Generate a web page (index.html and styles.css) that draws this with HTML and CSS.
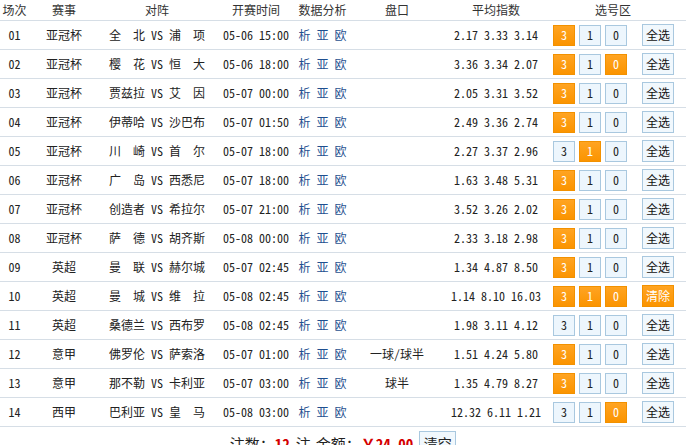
FILE: index.html
```html
<!DOCTYPE html>
<html lang="zh-CN">
<head>
<meta charset="utf-8">
<title>选号</title>
<link rel="stylesheet" href="styles.css">
</head>
<body>
<div class="table">
  <div class="row head">
    <div>场次</div><div>赛事</div><div>对阵</div><div>开赛时间</div><div>数据分析</div><div>盘口</div><div>平均指数</div><div class="sel-head">选号区</div>
  </div>
  <div class="row"><div>01</div><div>亚冠杯</div><div>全　北 VS 浦　项</div><div>05-06 15:00</div><div class="links"><a>析</a> <a>亚</a> <a>欧</a></div><div></div><div>2.17 3.33 3.14</div><div class="pick"><span class="b on">3</span><span class="b">1</span><span class="b">0</span><span class="all">全选</span></div></div>
  <div class="row"><div>02</div><div>亚冠杯</div><div>樱　花 VS 恒　大</div><div>05-06 18:00</div><div class="links"><a>析</a> <a>亚</a> <a>欧</a></div><div></div><div>3.36 3.34 2.07</div><div class="pick"><span class="b on">3</span><span class="b">1</span><span class="b on">0</span><span class="all">全选</span></div></div>
  <div class="row"><div>03</div><div>亚冠杯</div><div>贾兹拉 VS 艾　因</div><div>05-07 00:00</div><div class="links"><a>析</a> <a>亚</a> <a>欧</a></div><div></div><div>2.05 3.31 3.52</div><div class="pick"><span class="b on">3</span><span class="b">1</span><span class="b">0</span><span class="all">全选</span></div></div>
  <div class="row"><div>04</div><div>亚冠杯</div><div>伊蒂哈 VS 沙巴布</div><div>05-07 01:50</div><div class="links"><a>析</a> <a>亚</a> <a>欧</a></div><div></div><div>2.49 3.36 2.74</div><div class="pick"><span class="b on">3</span><span class="b">1</span><span class="b">0</span><span class="all">全选</span></div></div>
  <div class="row"><div>05</div><div>亚冠杯</div><div>川　崎 VS 首　尔</div><div>05-07 18:00</div><div class="links"><a>析</a> <a>亚</a> <a>欧</a></div><div></div><div>2.27 3.37 2.96</div><div class="pick"><span class="b">3</span><span class="b on">1</span><span class="b">0</span><span class="all">全选</span></div></div>
  <div class="row"><div>06</div><div>亚冠杯</div><div>广　岛 VS 西悉尼</div><div>05-07 18:00</div><div class="links"><a>析</a> <a>亚</a> <a>欧</a></div><div></div><div>1.63 3.48 5.31</div><div class="pick"><span class="b on">3</span><span class="b">1</span><span class="b">0</span><span class="all">全选</span></div></div>
  <div class="row"><div>07</div><div>亚冠杯</div><div>创造者 VS 希拉尔</div><div>05-07 21:00</div><div class="links"><a>析</a> <a>亚</a> <a>欧</a></div><div></div><div>3.52 3.26 2.02</div><div class="pick"><span class="b on">3</span><span class="b">1</span><span class="b">0</span><span class="all">全选</span></div></div>
  <div class="row"><div>08</div><div>亚冠杯</div><div>萨　德 VS 胡齐斯</div><div>05-08 00:00</div><div class="links"><a>析</a> <a>亚</a> <a>欧</a></div><div></div><div>2.33 3.18 2.98</div><div class="pick"><span class="b on">3</span><span class="b">1</span><span class="b">0</span><span class="all">全选</span></div></div>
  <div class="row"><div>09</div><div>英超</div><div>曼　联 VS 赫尔城</div><div>05-07 02:45</div><div class="links"><a>析</a> <a>亚</a> <a>欧</a></div><div></div><div>1.34 4.87 8.50</div><div class="pick"><span class="b on">3</span><span class="b">1</span><span class="b">0</span><span class="all">全选</span></div></div>
  <div class="row"><div>10</div><div>英超</div><div>曼　城 VS 维　拉</div><div>05-08 02:45</div><div class="links"><a>析</a> <a>亚</a> <a>欧</a></div><div></div><div>1.14 8.10 16.03</div><div class="pick"><span class="b on">3</span><span class="b on">1</span><span class="b on">0</span><span class="all on">清除</span></div></div>
  <div class="row"><div>11</div><div>英超</div><div>桑德兰 VS 西布罗</div><div>05-08 02:45</div><div class="links"><a>析</a> <a>亚</a> <a>欧</a></div><div></div><div>1.98 3.11 4.12</div><div class="pick"><span class="b">3</span><span class="b">1</span><span class="b">0</span><span class="all">全选</span></div></div>
  <div class="row"><div>12</div><div>意甲</div><div>佛罗伦 VS 萨索洛</div><div>05-07 01:00</div><div class="links"><a>析</a> <a>亚</a> <a>欧</a></div><div>一球/球半</div><div>1.51 4.24 5.80</div><div class="pick"><span class="b on">3</span><span class="b">1</span><span class="b">0</span><span class="all">全选</span></div></div>
  <div class="row"><div>13</div><div>意甲</div><div>那不勒 VS 卡利亚</div><div>05-07 03:00</div><div class="links"><a>析</a> <a>亚</a> <a>欧</a></div><div>球半</div><div>1.35 4.79 8.27</div><div class="pick"><span class="b on">3</span><span class="b">1</span><span class="b">0</span><span class="all">全选</span></div></div>
  <div class="row"><div>14</div><div>西甲</div><div>巴利亚 VS 皇　马</div><div>05-08 03:00</div><div class="links"><a>析</a> <a>亚</a> <a>欧</a></div><div></div><div>12.32 6.11 1.21</div><div class="pick"><span class="b">3</span><span class="b">1</span><span class="b on">0</span><span class="all">全选</span></div></div>
</div>
<div class="footer">
  <span>注数：</span><span class="red num">12</span><span class="unit">注</span><span>金额：</span><span class="red money">￥24.00</span><span class="clear">清空</span>
</div>
</body>
</html>
```

FILE: styles.css
```css
body {
  margin: 0;
  background: #fff;
  font-family: "Noto Sans Mono CJK SC", "Noto Sans CJK SC", monospace;
  font-size: 12px;
  color: #222;
}
.table {
  width: 686px;
}
.row {
  display: grid;
  grid-template-columns: 29px 70px 116px 82px 51px 98px 100px 140px;
  height: 28px;
  align-items: center;
  border-bottom: 1px solid #d6dee6;
  white-space: nowrap;
}
.row > div {
  text-align: center;
  line-height: 16px;
}
.row.head {
  height: 20px;
  color: #333;
}
.sel-head {
  padding-right: 6px;
}
.links a {
  color: #1f4f8f;
  text-decoration: none;
}
.row > .pick {
  display: flex;
  align-items: center;
  padding-left: 7px;
  text-align: left;
}
.b {
  display: flex;
  align-items: center;
  justify-content: center;
  width: 20px;
  height: 19px;
  margin-right: 4px;
  border: 1px solid #a9c8df;
  background: #edf6fd;
  color: #222;
}
.b.on, .all.on {
  border-color: #f29100;
  background: linear-gradient(#ffa422, #fb9400);
  color: #fff;
}
.all {
  display: flex;
  align-items: center;
  justify-content: center;
  width: 30px;
  height: 20px;
  margin-left: 11px;
  border: 1px solid #a9c8df;
  background: #f1f8fd;
  color: #111;
}
.footer {
  display: flex;
  justify-content: center;
  align-items: center;
  padding-top: 4px;
  font-size: 15px;
  color: #222;
  white-space: nowrap;
}
.footer .red {
  color: #d40000;
  font-weight: bold;
}
.footer .num {
  margin-right: 6px;
}
.footer .unit {
  margin-right: 5px;
}
.footer .money {
  margin-right: 6px;
}
.clear {
  display: inline-flex;
  align-items: center;
  justify-content: center;
  width: 35px;
  height: 22px;
  border: 1px solid #a9c8df;
  background: #f1f8fd;
  font-size: 14px;
}
```
